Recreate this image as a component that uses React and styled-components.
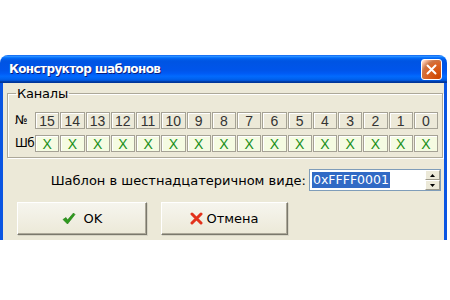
import React from "react";
import styled, { createGlobalStyle } from "styled-components";

const GlobalStyle = createGlobalStyle`
  html, body {
    margin: 0;
    padding: 0;
    background: #ffffff;
  }
  body {
    font-family: "DejaVu Sans", "Liberation Sans", sans-serif;
    font-size: 13px;
    color: #000;
  }
`;

const Page = styled.div`
  padding-top: 55px;
`;

const Window = styled.div`
  width: 447px;
  display: flex;
  flex-direction: column;
`;

const TitleBar = styled.div`
  height: 28px;
  display: flex;
  align-items: center;
  justify-content: space-between;
  padding: 0 5px 0 9px;
  border-radius: 8px 8px 0 0;
  background: linear-gradient(
    to bottom,
    #0058ee 0%,
    #3593ff 4%,
    #288eff 6%,
    #127dff 8%,
    #036ffc 10%,
    #0262ee 14%,
    #0057e5 20%,
    #0054e3 24%,
    #0055eb 56%,
    #005bf5 66%,
    #026afe 76%,
    #0062ef 86%,
    #0052d6 92%,
    #0040ab 94%,
    #003092 100%
  );
`;

const Title = styled.span`
  font-family: "DejaVu Sans", sans-serif;
  font-weight: bold;
  font-size: 12px;
  color: #fff;
  letter-spacing: -0.6px;
  text-shadow: 1px 1px 0 #0a1f7d;
`;

const CloseButton = styled.div`
  width: 21px;
  height: 21px;
  box-sizing: border-box;
  border: 1px solid #fff;
  border-radius: 3px;
  display: flex;
  align-items: center;
  justify-content: center;
  background: radial-gradient(
    circle at 90% 90%,
    #cc4600 0%,
    #dc6527 55%,
    #cd7546 70%,
    #ffccb2 90%,
    #ffffff 100%
  );
`;

const Frame = styled.div`
  background: #ece9d8;
  border-left: 3px solid #0a55e2;
  border-right: 3px solid #0a55e2;
  padding: 3px 1px 5px 4px;
  display: flex;
  flex-direction: column;
`;

const Group = styled.fieldset`
  margin: 0;
  padding: 11px 4px 5px 7px;
  border: 1px solid #aca899;
  box-shadow: inset 1px 1px 0 #fff, 1px 1px 0 #fff;
  min-width: 0;
`;

const Legend = styled.legend`
  padding: 0 1px;
  margin-left: 1px;
  line-height: 15px;
  font-size: 13px;
  letter-spacing: -0.2px;
`;

const Row = styled.div`
  display: flex;
  align-items: center;
  height: 17px;
  & + & {
    margin-top: 6px;
  }
`;

const RowLabel = styled.span`
  width: 20px;
  flex: none;
  font-size: 12px;
  letter-spacing: -0.6px;
  line-height: 17px;
  white-space: nowrap;
  overflow: hidden;
`;

const Cells = styled.div`
  flex: 1;
  display: grid;
  grid-template-columns: repeat(16, 1fr);
  gap: 1px;
  height: 100%;
`;

const Cell = styled.div`
  box-sizing: border-box;
  height: 17px;
  display: flex;
  align-items: center;
  justify-content: center;
  border: 1px solid #a5a295;
  box-shadow: inset 1px 1px 0 #fff;
  font-family: "Liberation Sans", sans-serif;
  font-size: 14px;
  background: ${(p) => (p.$mask ? "#f5fbe2" : "#ece9d8")};
  color: ${(p) => (p.$mask ? "#1a8f1a" : "#333")};
`;

const HexRow = styled.div`
  margin-top: 11px;
  display: flex;
  align-items: center;
  justify-content: flex-end;
  gap: 3px;
  padding-right: 2px;
`;

const HexLabel = styled.span`
  font-size: 13px;
`;

const SpinEdit = styled.div`
  width: 132px;
  height: 22px;
  box-sizing: border-box;
  border: 1px solid #7f9db9;
  background: #fff;
  display: flex;
`;

const EditText = styled.div`
  flex: 1;
  padding: 2px 0 0 2px;
`;

const Selected = styled.span`
  display: inline-block;
  background: #316ac5;
  color: #fff;
  font-size: 12.5px;
  line-height: 16px;
  padding: 0 1px;
`;

const SpinButtons = styled.div`
  width: 15px;
  display: flex;
  flex-direction: column;
`;

const SpinButton = styled.div`
  flex: 1;
  box-sizing: border-box;
  background: #ece9d8;
  border: 1px solid;
  border-color: #fff #9d9a8c #9d9a8c #fff;
  display: flex;
  align-items: center;
  justify-content: center;
`;

const Buttons = styled.div`
  margin-top: 11px;
  padding-left: 10px;
  display: flex;
  gap: 14px;
`;

const Button = styled.div`
  width: ${(p) => p.$w}px;
  height: 33px;
  box-sizing: border-box;
  display: flex;
  align-items: center;
  justify-content: center;
  gap: ${(p) => p.$gap}px;
  background: linear-gradient(#f6f5ee, #ece9d8);
  border: 1px solid;
  border-color: #fff #7a786c #7a786c #fff;
  box-shadow: inset -1px -1px 0 #aca899, 1px 1px 0 #d8d5c6;
  font-size: 13px;
  font-weight: normal;
`;

const CheckIcon = () => (
  <svg width="14" height="13" viewBox="0 0 14 13">
    <path
      d="M1 7.5 L4 5.5 L5.5 8 L11.5 1 L13 2.5 L5.5 12 Z"
      fill="#2f9a1e"
      stroke="#1f7a12"
      strokeWidth="0.6"
      strokeLinejoin="round"
    />
  </svg>
);

const CrossIcon = ({ size = 13, color = "#e2321c" }) => (
  <svg width={size} height={size} viewBox="0 0 13 13">
    <path
      d="M2 2 L11 11 M11 2 L2 11"
      stroke={color}
      strokeWidth="3"
      strokeLinecap="round"
    />
  </svg>
);

const Arrow = ({ up }) => (
  <svg width="5" height="3" viewBox="0 0 5 3">
    <path d={up ? "M0 3 L2.5 0 L5 3 Z" : "M0 0 L2.5 3 L5 0 Z"} fill="#000" />
  </svg>
);

const bits = Array.from({ length: 16 }, (_, i) => 15 - i);

export default function App() {
  return (
    <Page>
      <GlobalStyle />
      <Window>
        <TitleBar>
          <Title>Конструктор шаблонов</Title>
          <CloseButton>
            <svg width="11" height="11" viewBox="0 0 11 11">
              <path
                d="M1.5 1.5 L9.5 9.5 M9.5 1.5 L1.5 9.5"
                stroke="#fff"
                strokeWidth="2"
                strokeLinecap="round"
              />
            </svg>
          </CloseButton>
        </TitleBar>
        <Frame>
          <Group>
            <Legend>Каналы</Legend>
            <Row>
              <RowLabel>№</RowLabel>
              <Cells>
                {bits.map((b) => (
                  <Cell key={b}>{b}</Cell>
                ))}
              </Cells>
            </Row>
            <Row>
              <RowLabel>Шб</RowLabel>
              <Cells>
                {bits.map((b) => (
                  <Cell key={b} $mask>
                    X
                  </Cell>
                ))}
              </Cells>
            </Row>
          </Group>
          <HexRow>
            <HexLabel>Шаблон в шестнадцатеричном виде:</HexLabel>
            <SpinEdit>
              <EditText>
                <Selected>0xFFFF0001</Selected>
              </EditText>
              <SpinButtons>
                <SpinButton>
                  <Arrow up />
                </SpinButton>
                <SpinButton>
                  <Arrow />
                </SpinButton>
              </SpinButtons>
            </SpinEdit>
          </HexRow>
          <Buttons>
            <Button $w={130} $gap={8}>
              <CheckIcon />
              <span>OK</span>
            </Button>
            <Button $w={127} $gap={3}>
              <CrossIcon />
              <span>Отмена</span>
            </Button>
          </Buttons>
        </Frame>
      </Window>
    </Page>
  );
}
